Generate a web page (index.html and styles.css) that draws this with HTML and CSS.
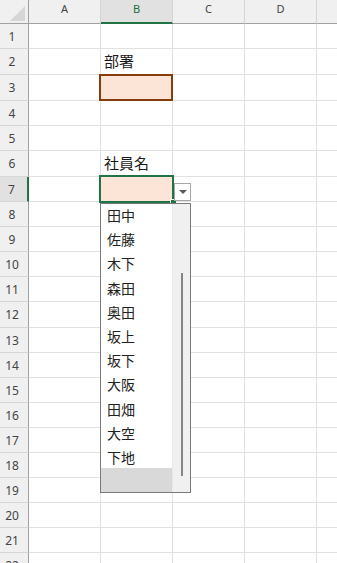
FILE: index.html
```
<!DOCTYPE html>
<html>

<head>
    <title>社員名リスト</title>
    <link rel="stylesheet" href="styles.css">
</head>

<body>
    <div class="sheet">
        <div class="row head">
            <div class="corner">
                <svg width="15" height="15" viewBox="0 0 15 15"><polygon points="15,0 15,15 0,15" fill="#d6d6d6" /></svg>
            </div>
            <div class="ch">A</div>
            <div class="ch sel">B</div>
            <div class="ch">C</div>
            <div class="ch">D</div>
            <div class="ch"></div>
        </div>
        <div class="row"><div class="rh">1</div><div class="c"></div><div class="c"></div><div class="c"></div><div class="c"></div><div class="c"></div></div>
        <div class="row tall"><div class="rh">2</div><div class="c"></div><div class="c txt">部署</div><div class="c"></div><div class="c"></div><div class="c"></div></div>
        <div class="row tall"><div class="rh">3</div><div class="c"></div><div class="c input"></div><div class="c"></div><div class="c"></div><div class="c"></div></div>
        <div class="row"><div class="rh">4</div><div class="c"></div><div class="c"></div><div class="c"></div><div class="c"></div><div class="c"></div></div>
        <div class="row"><div class="rh">5</div><div class="c"></div><div class="c"></div><div class="c"></div><div class="c"></div><div class="c"></div></div>
        <div class="row tall"><div class="rh">6</div><div class="c"></div><div class="c txt">社員名</div><div class="c"></div><div class="c"></div><div class="c"></div></div>
        <div class="row">
            <div class="rh sel">7</div>
            <div class="c"></div>
            <div class="c active">
                <div class="handle"></div>
                <div class="dd-btn"><span class="arrow"></span></div>
                <div class="dd">
                    <div class="dd-list">
                        <div class="dd-items">
                            <div class="dd-item">田中</div>
                            <div class="dd-item">佐藤</div>
                            <div class="dd-item">木下</div>
                            <div class="dd-item">森田</div>
                            <div class="dd-item">奥田</div>
                            <div class="dd-item">坂上</div>
                            <div class="dd-item">坂下</div>
                            <div class="dd-item">大阪</div>
                            <div class="dd-item">田畑</div>
                            <div class="dd-item">大空</div>
                            <div class="dd-item">下地</div>
                        </div>
                        <div class="dd-foot"></div>
                    </div>
                    <div class="dd-bar"><div class="thumb"></div></div>
                </div>
            </div>
            <div class="c"></div><div class="c"></div><div class="c"></div>
        </div>
        <div class="row"><div class="rh">8</div><div class="c"></div><div class="c"></div><div class="c"></div><div class="c"></div><div class="c"></div></div>
        <div class="row"><div class="rh">9</div><div class="c"></div><div class="c"></div><div class="c"></div><div class="c"></div><div class="c"></div></div>
        <div class="row"><div class="rh">10</div><div class="c"></div><div class="c"></div><div class="c"></div><div class="c"></div><div class="c"></div></div>
        <div class="row"><div class="rh">11</div><div class="c"></div><div class="c"></div><div class="c"></div><div class="c"></div><div class="c"></div></div>
        <div class="row tall"><div class="rh">12</div><div class="c"></div><div class="c"></div><div class="c"></div><div class="c"></div><div class="c"></div></div>
        <div class="row"><div class="rh">13</div><div class="c"></div><div class="c"></div><div class="c"></div><div class="c"></div><div class="c"></div></div>
        <div class="row"><div class="rh">14</div><div class="c"></div><div class="c"></div><div class="c"></div><div class="c"></div><div class="c"></div></div>
        <div class="row"><div class="rh">15</div><div class="c"></div><div class="c"></div><div class="c"></div><div class="c"></div><div class="c"></div></div>
        <div class="row"><div class="rh">16</div><div class="c"></div><div class="c"></div><div class="c"></div><div class="c"></div><div class="c"></div></div>
        <div class="row"><div class="rh">17</div><div class="c"></div><div class="c"></div><div class="c"></div><div class="c"></div><div class="c"></div></div>
        <div class="row"><div class="rh">18</div><div class="c"></div><div class="c"></div><div class="c"></div><div class="c"></div><div class="c"></div></div>
        <div class="row"><div class="rh">19</div><div class="c"></div><div class="c"></div><div class="c"></div><div class="c"></div><div class="c"></div></div>
        <div class="row"><div class="rh">20</div><div class="c"></div><div class="c"></div><div class="c"></div><div class="c"></div><div class="c"></div></div>
        <div class="row"><div class="rh">21</div><div class="c"></div><div class="c"></div><div class="c"></div><div class="c"></div><div class="c"></div></div>
        <div class="row"><div class="rh">22</div><div class="c"></div><div class="c"></div><div class="c"></div><div class="c"></div><div class="c"></div></div>
    </div>
</body>

</html>
```
FILE: styles.css
```
* {
    box-sizing: border-box;
}

body {
    margin: 0;
    background-color: #ffffff;
    overflow: hidden;
    font-family: "Noto Sans", "Liberation Sans", sans-serif;
}

.sheet {
    width: 337px;
    height: 563px;
    overflow: hidden;
}

.row {
    display: flex;
    height: 25px;
}

.row.tall {
    height: 26px;
}

.row.head {
    height: 24px;
}

/* headers */
.corner {
    width: 29px;
    flex: none;
    display: flex;
    align-items: flex-end;
    justify-content: flex-end;
    padding: 0 3px 2px 0;
    background-color: #f0f0f0;
    border-right: 1px solid #a0a0a0;
    border-bottom: 1px solid #a0a0a0;
}

.ch {
    width: 72px;
    flex: none;
    text-align: center;
    font-size: 11px;
    line-height: 18px;
    color: #444444;
    background-color: #f0f0f0;
    border-right: 1px solid #d4d4d4;
    border-bottom: 1px solid #a0a0a0;
}

.ch.sel {
    background-color: #e1e1e1;
    color: #1d6b3f;
    border-bottom: 2px solid #217346;
}

.rh {
    width: 29px;
    flex: none;
    display: flex;
    align-items: center;
    justify-content: center;
    padding-right: 4px;
    font-size: 12px;
    color: #444444;
    background-color: #f0f0f0;
    border-right: 1px solid #a0a0a0;
    border-bottom: 1px solid #d6d6d6;
}

.rh.sel {
    background-color: #e1e1e1;
    border-right: 2px solid #217346;
}

/* cells */
.c {
    width: 72px;
    flex: none;
    border-right: 1px solid #e1e1e1;
    border-bottom: 1px solid #e1e1e1;
}

.txt {
    display: flex;
    align-items: center;
    padding: 0 0 2px 3px;
    font-family: "Noto Sans CJK JP", sans-serif;
    font-size: 15px;
    color: #1a1a1a;
}

.input {
    width: 74px;
    margin: -1px 0 0 -2px;
    border: 2px solid #843c0c;
    background-color: #fce4d6;
}

.active {
    position: relative;
    z-index: 2;
    width: 75px;
    margin: -2px -1px -1px -2px;
    border: 2px solid #217346;
    background-color: #fce4d6;
}

.handle {
    position: absolute;
    left: 69px;
    top: 22px;
    width: 6px;
    height: 6px;
    background-color: #217346;
    border-left: 1px solid #ffffff;
    border-top: 1px solid #ffffff;
}

.dd-btn {
    position: absolute;
    left: 73px;
    top: 6px;
    width: 17px;
    height: 18px;
    display: flex;
    align-items: center;
    justify-content: center;
    background-color: #ffffff;
    border: 1px solid #a6a6a6;
}

.arrow {
    width: 0;
    height: 0;
    border-left: 4px solid transparent;
    border-right: 4px solid transparent;
    border-top: 4px solid #5a5a5a;
}

/* dropdown list */
.dd {
    position: absolute;
    left: -1px;
    top: 26px;
    width: 91px;
    height: 290px;
    display: flex;
    background-color: #ffffff;
    border: 1px solid #7a7a7a;
}

.dd-list {
    width: 72px;
    display: flex;
    flex-direction: column;
    border-right: 1px solid #e4e9f0;
}

.dd-items {
    flex: 1;
    overflow: hidden;
}

.dd-item {
    height: 24.2px;
    line-height: 23px;
    padding-left: 6px;
    font-family: "Noto Sans CJK JP", sans-serif;
    font-size: 14px;
    color: #222222;
}

.dd-foot {
    height: 24px;
    flex: none;
    background-color: #d9d9d9;
}

.dd-bar {
    width: 17px;
    display: flex;
    justify-content: center;
    padding: 69px 0 16px;
    background-color: #f0f0f0;
}

.thumb {
    width: 2px;
    background-color: #858585;
}
```
